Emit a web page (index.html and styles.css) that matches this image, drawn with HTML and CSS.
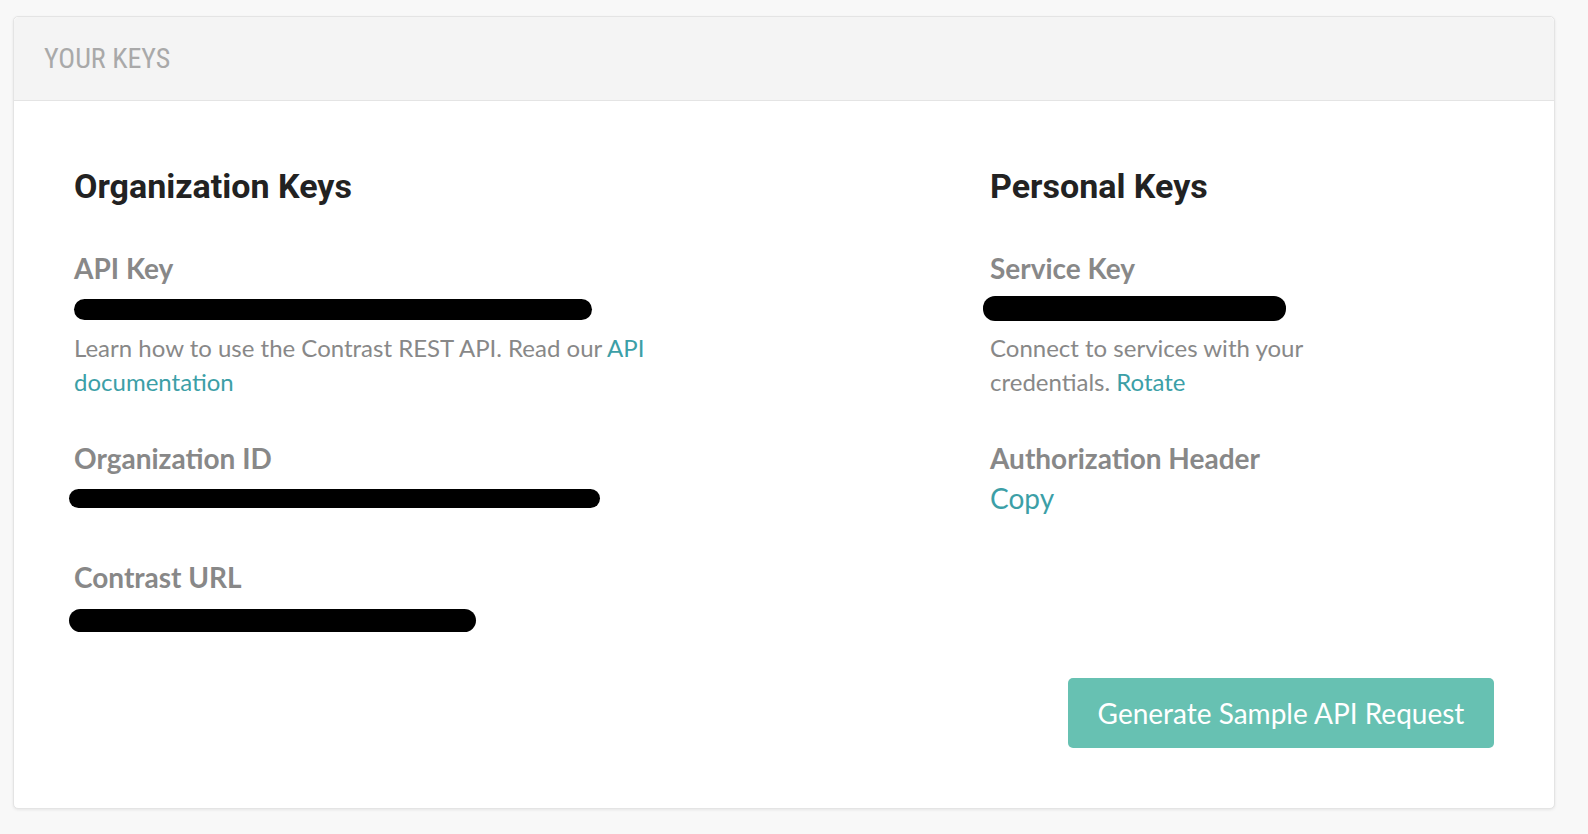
FILE: index.html
```html
<!DOCTYPE html>
<html lang="en">
<head>
<meta charset="utf-8">
<title>Your Keys</title>
<link rel="stylesheet" href="styles.css">
</head>
<body>
<div class="page">
  <section class="panel">
    <header class="panel-header">
      <h1 class="panel-title">YOUR KEYS</h1>
    </header>
    <div class="panel-body">
      <div class="columns">
        <div class="column">
          <h2 class="column-title">Organization Keys</h2>
          <div class="field">
            <div class="field-label">API Key</div>
            <div class="field-value"><span class="redact redact-api"></span></div>
            <p class="field-desc desc-left">Learn how to use the Contrast REST API. Read our <a href="#" class="link">API</a> <a href="#" class="link">documentation</a></p>
          </div>
          <div class="field">
            <div class="field-label">Organization ID</div>
            <div class="field-value"><span class="redact redact-org"></span></div>
          </div>
          <div class="field">
            <div class="field-label">Contrast URL</div>
            <div class="field-value"><span class="redact redact-url"></span></div>
          </div>
        </div>
        <div class="column">
          <h2 class="column-title">Personal Keys</h2>
          <div class="field">
            <div class="field-label">Service Key</div>
            <div class="field-value"><span class="redact redact-service"></span></div>
            <p class="field-desc desc-right">Connect to services with your credentials. <a href="#" class="link">Rotate</a></p>
          </div>
          <div class="field">
            <div class="field-label">Authorization Header</div>
            <a href="#" class="link copy-link">Copy</a>
          </div>
        </div>
      </div>
      <div class="actions">
        <button class="btn-primary" type="button">Generate Sample API Request</button>
      </div>
    </div>
  </section>
</div>
</body>
</html>
```

FILE: styles.css
```css
* { box-sizing: border-box; }

html, body {
  margin: 0;
  padding: 0;
  background: #f8f8f8;
}

body {
  font-family: "Lato", "Liberation Sans", sans-serif;
  color: #888888;
}

.page {
  padding: 16px 33px 20px 13px;
}

.panel {
  background: #ffffff;
  border: 1px solid #e4e4e4;
  border-radius: 5px;
  box-shadow: 0 1px 3px rgba(0, 0, 0, 0.08);
}

.panel-header {
  height: 84px;
  background: #f4f4f4;
  border-bottom: 1px solid #e4e4e4;
  border-radius: 5px 5px 0 0;
  display: flex;
  align-items: center;
  padding-left: 30px;
}

.panel-title {
  margin: 0;
  font-family: "Roboto", "Liberation Sans", sans-serif;
  font-weight: 400;
  font-size: 28px;
  font-stretch: 80%;
  color: #a9a9a9;
}

.panel-body {
  padding: 65px 60px 60px 60px;
}

.columns {
  display: grid;
  grid-template-columns: 916px 1fr;
}

.column-title {
  margin: 0 0 45px 0;
  font-family: "Roboto", "Liberation Sans", sans-serif;
  font-weight: 700;
  font-size: 34px;
  line-height: 40px;
  color: #222222;
}

.field {
  margin-bottom: 39px;
}

.field:last-child {
  margin-bottom: 0;
}

.field-label {
  font-weight: 700;
  font-size: 28px;
  line-height: 34px;
  color: #888888;
}

.field-value {
  display: flex;
  align-items: flex-start;
  height: 46px;
}

.redact {
  display: block;
  background: #000000;
  border-radius: 12px;
}

.redact-api {
  width: 518px;
  height: 21px;
  margin-top: 14px;
}

.redact-org {
  width: 531px;
  height: 19px;
  margin-top: 14px;
  margin-left: -5px;
}

.redact-url {
  width: 407px;
  height: 23px;
  margin-top: 15px;
  margin-left: -5px;
}

.redact-service {
  width: 303px;
  height: 25px;
  margin-top: 11px;
  margin-left: -7px;
}

.field-desc {
  margin: 0;
  padding-bottom: 3px;
  font-size: 24px;
  line-height: 34px;
  color: #888888;
}

.desc-left { max-width: 660px; }
.desc-right { max-width: 380px; }

.link {
  color: #3c9fa7;
  text-decoration: none;
}

.copy-link {
  display: block;
  margin-top: 6px;
  font-size: 28px;
  line-height: 34px;
}

.actions {
  display: flex;
  justify-content: flex-end;
  margin-top: 38px;
}

.btn-primary {
  width: 426px;
  height: 70px;
  border: none;
  border-radius: 5px;
  background: #67c1b2;
  color: #ffffff;
  font-family: "Lato", "Liberation Sans", sans-serif;
  font-size: 28px;
  font-weight: 400;
  padding: 0;
  cursor: pointer;
}
```
